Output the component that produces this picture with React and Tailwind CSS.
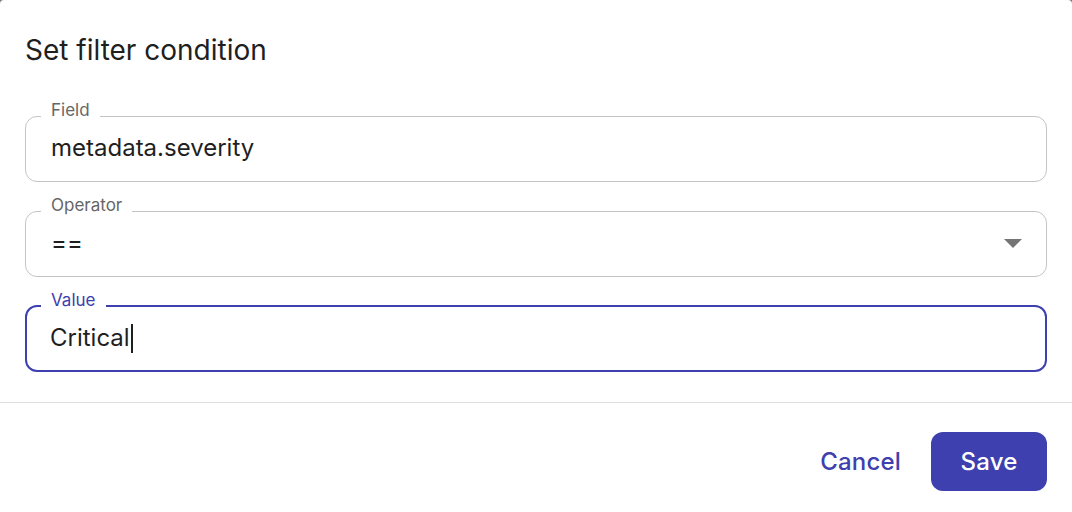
import React from "react";

function Field({ label, focused, children }) {
  return (
    <fieldset
      className={
        "m-0 min-w-0 rounded-[12px] pt-0 " +
        (focused ? "border-2 border-[#3d40ae] px-[14px] pb-[16px]" : "border border-[#c4c4c4] px-[15px] pb-[17px]")
      }
    >
      <legend
        className={
          "px-[10px] pb-[12px] text-[17px] leading-[20px] " +
          (focused ? "text-[#3d40ae]" : "text-[#666666]")
        }
      >
        {label}
      </legend>
      <div className="h-[32px] flex items-center pl-[10px] text-[24px] leading-[32px] text-[#1f1f1f]">
        {children}
      </div>
    </fieldset>
  );
}

export default function App() {
  return (
    <div className="h-[512px] w-[1072px] bg-[#7a7a7a] overflow-hidden" style={{ fontFamily: "Inter, 'Noto Sans', sans-serif" }}>
      <div className="h-full w-full bg-white rounded-t-[4px] flex flex-col">
        <div className="px-[25px] pt-[32px] pb-[30px]">
          <h2 className="text-[28px] leading-[36px] font-normal text-[#1f1f1f] mb-[32px]">Set filter condition</h2>
          <div className="flex flex-col gap-[13px]">
            <Field label="Field">
              <span>metadata.severity</span>
            </Field>
            <Field label="Operator">
              <div className="flex w-full items-center justify-between">
                <span>==</span>
                <svg width="18" height="9" viewBox="0 0 18 9" className="mr-[9px]">
                  <path d="M0 0 L18 0 L9 9 Z" fill="#757575" />
                </svg>
              </div>
            </Field>
            <Field label="Value" focused>
              <span className="-ml-[1px]">Critical</span>
              <span className="ml-[1px] inline-block h-[29px] w-[2px] bg-[#1f1f1f]" />
            </Field>
          </div>
        </div>
        <div className="border-t border-[#e0e0e0] flex justify-end items-center gap-[14px] pt-[29px] pr-[25px]">
          <button className="h-[59px] px-[16px] text-[24px] font-medium tracking-[0.2px] text-[#3d40ae] rounded-[10px]">Cancel</button>
          <button className="h-[59px] w-[116px] text-[24px] font-medium tracking-[0.2px] text-white bg-[#3d40ae] rounded-[12px]">Save</button>
        </div>
      </div>
    </div>
  );
}
